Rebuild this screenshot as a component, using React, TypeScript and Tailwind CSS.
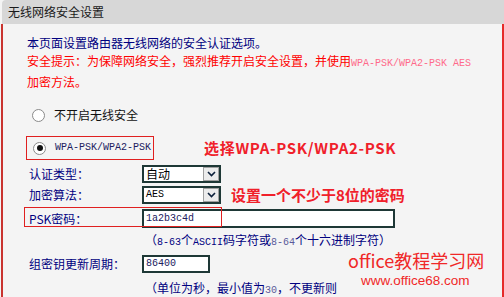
import React from 'react'

const mono = "font-['Liberation_Mono',monospace]"

function Radio({ checked }: { checked?: boolean }) {
  return (
    <div className="w-[13px] h-[13px] rounded-full border border-[#8a8a8a] bg-white flex items-center justify-center shrink-0">
      {checked && <div className="w-[6px] h-[6px] rounded-full bg-[#111]" />}
    </div>
  )
}

function Select({ value, isMono }: { value: string; isMono?: boolean }) {
  return (
    <div className="w-[79px] h-[18px] border-2 border-[#1e3836] bg-white flex items-center">
      <span className={`flex-1 pl-[2px] text-black ${isMono ? mono + ' text-[10px] text-[#101060]' : 'text-[12px]'}`}>{value}</span>
      <div className="w-[16px] h-[14px] bg-[#ececec] border border-[#a0a0a0] flex items-center justify-center">
        <svg width="9" height="6" viewBox="0 0 9 6">
          <path d="M1 1 L4.5 4.5 L8 1" stroke="#0b1f3a" strokeWidth="1.6" fill="none" />
        </svg>
      </div>
    </div>
  )
}

export default function App() {
  return (
    <div className="w-[504px] h-[297px] bg-[#f4f4f4] overflow-hidden relative font-['Noto_Sans_CJK_SC',sans-serif]">
      <div className="h-[24px] ml-[2px] bg-[#d7d7d7] rounded-tl-[4px] pl-[6px] text-[12px] leading-[24px] text-[#1a1a1a]">无线网络安全设置</div>
      <div className="ml-[1px] h-[273px] border-l-2 border-r-2 border-l-[#c9342f] border-r-[#e52a2a] pt-[10px] pl-[24px] text-[12px] leading-[18px] text-[#000080]">
        <div>本页面设置路由器无线网络的安全认证选项。</div>
        <div className="text-[#ff0000]">
          安全提示：为保障网络安全，强烈推荐开启安全设置，并使用<span className={`${mono} text-[10px] text-[#ff6a8a]`}>WPA-PSK/WPA2-PSK AES</span>
        </div>
        <div className="text-[#ff0000]">加密方法。</div>

        <div className="mt-[14px] h-[20px] flex items-center pl-[5px] gap-[9px] text-[#111]">
          <Radio />
          <span>不开启无线安全</span>
        </div>

        <div className="mt-[11px] flex items-center">
          <div className="-ml-px w-[128px] h-[24px] border border-[#e02020] flex items-center pl-[6px] gap-[9px]">
            <Radio checked />
            <span className={`${mono} text-[10px] text-[#202060]`}>WPA-PSK/WPA2-PSK</span>
          </div>
          <span className="ml-[50px] text-[15px] font-bold tracking-[0.7px] text-[#f0202a] leading-[18px]">选择WPA-PSK/WPA2-PSK</span>
        </div>

        <div className="mt-[4px] h-[20px] flex items-center">
          <span className="w-[115px] pl-[2px]">认证类型：</span>
          <Select value="自动" />
        </div>
        <div className="mt-[1px] h-[20px] flex items-center">
          <span className="w-[115px] pl-[2px]">加密算法：</span>
          <Select value="AES" isMono />
          <span className="ml-[10px] text-[15px] font-bold text-[#f0202a] leading-[18px]">设置一个不少于8位的密码</span>
        </div>

        <div className="mt-[3px] h-[21px] flex items-center relative">
          <span className="w-[115px] pl-[2px]">PSK密码：</span>
          <div className={`w-[253px] h-[19px] border-2 border-[#1e3836] bg-white flex items-center pl-[2px] ${mono} text-[10px] text-[#202060]`}>1a2b3c4d</div>
          <div className="absolute left-[-3px] top-[-1px] w-[198px] h-[20px] border border-[#e02020]" />
        </div>

        <div className="mt-[2px] pl-[118px]">
          （<span className={`${mono} text-[10px]`}>8-63</span>个<span className={`${mono} text-[10px]`}>ASCII</span>码字符或<span className={`${mono} text-[10px] text-[#5a5a9a]`}>8-64</span>个十六进制字符）
        </div>

        <div className="mt-[2px] h-[20px] flex items-center">
          <span className="w-[115px] pl-[2px]">组密钥更新周期：</span>
          <div className={`w-[68px] h-[18px] border-2 border-[#1e3836] bg-white flex items-center pl-[2px] ${mono} text-[10px] text-[#202060]`}>86400</div>
        </div>

        <div className="mt-[5px] pl-[118px]">
          （单位为秒，最小值为<span className={`${mono} text-[10px] text-[#5a5a9a]`}>30</span>，不更新则
        </div>
      </div>

      <div className="absolute left-[348px] top-[250px] text-[18px] leading-[20px] text-[#f02828]">office教程学习网</div>
      <div className="absolute left-[361px] top-[273px] text-[13.5px] leading-[16px] text-[#f02828] font-['Liberation_Sans',sans-serif]">www.office68.com</div>
    </div>
  )
}
